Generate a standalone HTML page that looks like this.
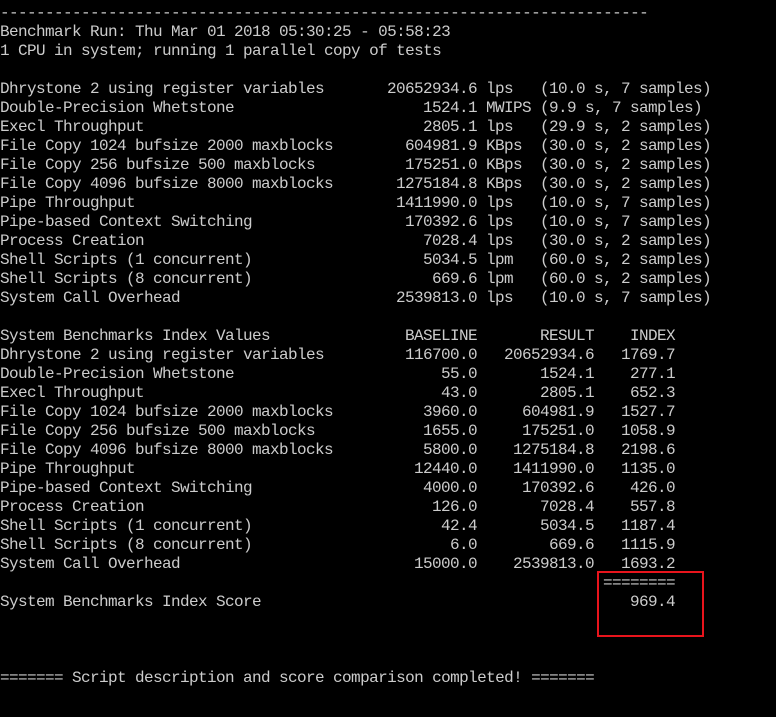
<!DOCTYPE html>
<html><head><style>
html,body{margin:0;padding:0;background:#000;width:776px;height:717px;overflow:hidden}
body{position:relative;font-family:"Liberation Mono","DejaVu Sans Mono",monospace;font-size:16px;letter-spacing:-0.6px;color:#cccccc}
.r{position:absolute;left:0;height:19px;line-height:19px;white-space:pre;width:776px}
.r span{position:absolute;top:1px}
.a{left:0}
.n{right:299px}
.u{left:486px}
.p{left:540px}
.b{right:299px}
.s{right:182px}
.i{right:101px}
.box{position:absolute;left:597px;top:571px;width:103px;height:62px;border:2px solid #e8141c}
</style></head><body>
<div class="r" style="top:3px"><span class="a">------------------------------------------------------------------------</span></div>
<div class="r" style="top:22px"><span class="a">Benchmark Run: Thu Mar 01 2018 05:30:25 - 05:58:23</span></div>
<div class="r" style="top:41px"><span class="a">1 CPU in system; running 1 parallel copy of tests</span></div>

<div class="r" style="top:79px"><span class="a">Dhrystone 2 using register variables</span><span class="n">20652934.6</span><span class="u">lps</span><span class="p">(10.0 s, 7 samples)</span></div>
<div class="r" style="top:98px"><span class="a">Double-Precision Whetstone</span><span class="n">1524.1</span><span class="u">MWIPS</span><span class="p">(9.9 s, 7 samples)</span></div>
<div class="r" style="top:117px"><span class="a">Execl Throughput</span><span class="n">2805.1</span><span class="u">lps</span><span class="p">(29.9 s, 2 samples)</span></div>
<div class="r" style="top:136px"><span class="a">File Copy 1024 bufsize 2000 maxblocks</span><span class="n">604981.9</span><span class="u">KBps</span><span class="p">(30.0 s, 2 samples)</span></div>
<div class="r" style="top:155px"><span class="a">File Copy 256 bufsize 500 maxblocks</span><span class="n">175251.0</span><span class="u">KBps</span><span class="p">(30.0 s, 2 samples)</span></div>
<div class="r" style="top:174px"><span class="a">File Copy 4096 bufsize 8000 maxblocks</span><span class="n">1275184.8</span><span class="u">KBps</span><span class="p">(30.0 s, 2 samples)</span></div>
<div class="r" style="top:193px"><span class="a">Pipe Throughput</span><span class="n">1411990.0</span><span class="u">lps</span><span class="p">(10.0 s, 7 samples)</span></div>
<div class="r" style="top:212px"><span class="a">Pipe-based Context Switching</span><span class="n">170392.6</span><span class="u">lps</span><span class="p">(10.0 s, 7 samples)</span></div>
<div class="r" style="top:231px"><span class="a">Process Creation</span><span class="n">7028.4</span><span class="u">lps</span><span class="p">(30.0 s, 2 samples)</span></div>
<div class="r" style="top:250px"><span class="a">Shell Scripts (1 concurrent)</span><span class="n">5034.5</span><span class="u">lpm</span><span class="p">(60.0 s, 2 samples)</span></div>
<div class="r" style="top:269px"><span class="a">Shell Scripts (8 concurrent)</span><span class="n">669.6</span><span class="u">lpm</span><span class="p">(60.0 s, 2 samples)</span></div>
<div class="r" style="top:288px"><span class="a">System Call Overhead</span><span class="n">2539813.0</span><span class="u">lps</span><span class="p">(10.0 s, 7 samples)</span></div>

<div class="r" style="top:326px"><span class="a">System Benchmarks Index Values</span><span class="b">BASELINE</span><span class="s">RESULT</span><span class="i">INDEX</span></div>
<div class="r" style="top:345px"><span class="a">Dhrystone 2 using register variables</span><span class="b">116700.0</span><span class="s">20652934.6</span><span class="i">1769.7</span></div>
<div class="r" style="top:364px"><span class="a">Double-Precision Whetstone</span><span class="b">55.0</span><span class="s">1524.1</span><span class="i">277.1</span></div>
<div class="r" style="top:383px"><span class="a">Execl Throughput</span><span class="b">43.0</span><span class="s">2805.1</span><span class="i">652.3</span></div>
<div class="r" style="top:402px"><span class="a">File Copy 1024 bufsize 2000 maxblocks</span><span class="b">3960.0</span><span class="s">604981.9</span><span class="i">1527.7</span></div>
<div class="r" style="top:421px"><span class="a">File Copy 256 bufsize 500 maxblocks</span><span class="b">1655.0</span><span class="s">175251.0</span><span class="i">1058.9</span></div>
<div class="r" style="top:440px"><span class="a">File Copy 4096 bufsize 8000 maxblocks</span><span class="b">5800.0</span><span class="s">1275184.8</span><span class="i">2198.6</span></div>
<div class="r" style="top:459px"><span class="a">Pipe Throughput</span><span class="b">12440.0</span><span class="s">1411990.0</span><span class="i">1135.0</span></div>
<div class="r" style="top:478px"><span class="a">Pipe-based Context Switching</span><span class="b">4000.0</span><span class="s">170392.6</span><span class="i">426.0</span></div>
<div class="r" style="top:497px"><span class="a">Process Creation</span><span class="b">126.0</span><span class="s">7028.4</span><span class="i">557.8</span></div>
<div class="r" style="top:516px"><span class="a">Shell Scripts (1 concurrent)</span><span class="b">42.4</span><span class="s">5034.5</span><span class="i">1187.4</span></div>
<div class="r" style="top:535px"><span class="a">Shell Scripts (8 concurrent)</span><span class="b">6.0</span><span class="s">669.6</span><span class="i">1115.9</span></div>
<div class="r" style="top:554px"><span class="a">System Call Overhead</span><span class="b">15000.0</span><span class="s">2539813.0</span><span class="i">1693.2</span></div>
<div class="r" style="top:573px"><span class="i">========</span></div>
<div class="r" style="top:592px"><span class="a">System Benchmarks Index Score</span><span class="i">969.4</span></div>

<div class="r" style="top:668px"><span class="a">======= Script description and score comparison completed! =======</span></div>
<div class="box"></div>
</body></html>
